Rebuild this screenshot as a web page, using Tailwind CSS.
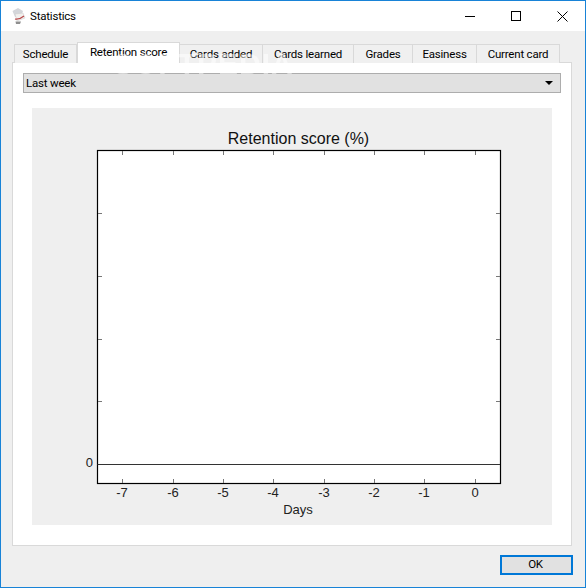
<!DOCTYPE html>
<html lang="en">
<head>
    <meta charset="UTF-8">
    <title>Statistics</title>
    <script src="https://cdn.jsdelivr.net/npm/@tailwindcss/browser@4"></script>
</head>
<body class="w-[586px] h-[588px] overflow-hidden">
    <div class="relative w-full h-full flex flex-col border border-[#1883d7] bg-[#efefef] font-['Roboto','Noto_Sans',sans-serif] text-[11.5px] tracking-[-0.2px] text-black">

        <!-- Title bar -->
        <div class="h-[30px] bg-white flex items-center shrink-0">
            <svg class="ml-[10px] w-[16px] h-[18px]" viewBox="0 0 16 18">
                <path d="M1.5 4 L7 1 L12 4 L10 9 L4 10 Z" fill="#d4d6da"/>
                <path d="M4 7 L12 6 L14 11 L6 14 Z" fill="#f1f0ee" stroke="#c8c8c8" stroke-width="0.5"/>
                <path d="M4 12 Q8 13 13 9" fill="none" stroke="#b8494a" stroke-width="1.2"/>
                <path d="M4.5 14.5 H10 L9 17 H5 Z" fill="#8f8f8f"/>
            </svg>
            <span class="ml-[3px] pt-px">Statistics</span>
            <div class="ml-auto flex items-center">
                <div class="w-[46px] h-[30px] flex items-center justify-center">
                    <div class="w-[10px] h-px bg-black"></div>
                </div>
                <div class="w-[46px] h-[30px] flex items-center justify-center">
                    <div class="w-[10px] h-[10px] border border-black"></div>
                </div>
                <div class="w-[46px] h-[30px] flex items-center justify-center">
                    <svg class="w-[11px] h-[11px]" viewBox="0 0 11 11"><path d="M0.5 0.5 L10.5 10.5 M10.5 0.5 L0.5 10.5" stroke="#000" stroke-width="1" fill="none"/></svg>
                </div>
            </div>
        </div>

        <!-- Tabs + pane -->
        <div class="ml-[11px] mr-[13px] mt-[11px] flex flex-col">
            <div class="flex items-end h-[21px] pl-[2px] relative z-10 -mb-px">
                <div class="w-[63px] h-[19px] pt-[2px] flex items-center justify-center bg-[#f0f0f0] border border-b-0 border-[#d9d9d9]">Schedule</div>
                <div class="w-[103px] h-[21px] flex items-center justify-center bg-white border border-b-0 border-[#d9d9d9]">Retention score</div>
                <div class="w-[83px] h-[19px] pt-[2px] flex items-center justify-center bg-[#f0f0f0] border border-b-0 border-l-0 border-[#d9d9d9]">Cards added</div>
                <div class="w-[91px] h-[19px] pt-[2px] flex items-center justify-center bg-[#f0f0f0] border border-b-0 border-l-0 border-[#d9d9d9]">Cards learned</div>
                <div class="w-[59px] h-[19px] pt-[2px] flex items-center justify-center bg-[#f0f0f0] border border-b-0 border-l-0 border-[#d9d9d9]">Grades</div>
                <div class="w-[64px] h-[19px] pt-[2px] flex items-center justify-center bg-[#f0f0f0] border border-b-0 border-l-0 border-[#d9d9d9]">Easiness</div>
                <div class="w-[83px] h-[19px] pt-[2px] flex items-center justify-center bg-[#f0f0f0] border border-b-0 border-l-0 border-[#d9d9d9]">Current card</div>
            </div>
            <div class="h-[484px] bg-white border border-[#d9d9d9] pt-[10px] px-[10px]">
                <div class="h-[20px] flex items-center justify-between bg-[#e1e1e1] border border-[#adadad] pl-[2px] pr-[7px]">
                    <span class="pt-[2px]">Last week</span>
                    <div class="w-0 h-0 border-x-[4px] border-x-transparent border-t-[4px] border-t-black"></div>
                </div>
                <div class="mt-[15px] ml-[9px] w-[520px] h-[417px] bg-[#efefef]">
                    <svg class="w-[520px] h-[417px] tracking-normal font-['Liberation_Sans',Arial,sans-serif]" viewBox="32 108 520 417">
                        <rect x="97.5" y="150.5" width="403" height="333" fill="#fff" stroke="#000" stroke-width="1.2"/>
                        <path d="M97.5 464.5 H500" stroke="#333" stroke-width="1"/>
                        <path d="M122.5 151V155 M173.5 151V155 M223.5 151V155 M273.5 151V155 M324.5 151V155 M374.5 151V155 M424.5 151V155 M475.5 151V155" stroke="#777"/>
                        <path d="M122.5 479V483 M173.5 479V483 M223.5 479V483 M273.5 479V483 M324.5 479V483 M374.5 479V483 M424.5 479V483 M475.5 479V483" stroke="#777"/>
                        <path d="M98 213.5H102 M98 276.5H102 M98 339.5H102 M98 401.5H102 M496 213.5H500 M496 276.5H500 M496 339.5H500 M496 401.5H500" stroke="#777"/>
                        <text x="298.5" y="144" text-anchor="middle" font-size="16" fill="#111">Retention score (%)</text>
                        <text x="93" y="467" text-anchor="end" font-size="13" fill="#222">0</text>
                        <g font-size="13" fill="#222" text-anchor="middle">
                            <text x="122" y="497">-7</text>
                            <text x="173" y="497">-6</text>
                            <text x="223" y="497">-5</text>
                            <text x="273" y="497">-4</text>
                            <text x="324" y="497">-3</text>
                            <text x="374" y="497">-2</text>
                            <text x="424" y="497">-1</text>
                            <text x="475" y="497">0</text>
                            <text x="298" y="514">Days</text>
                        </g>
                    </svg>
                </div>
            </div>
        </div>

        <!-- Footer -->
        <div class="flex justify-end mr-[12px] mt-[9px]">
            <button class="w-[73px] h-[20px] pr-[2px] bg-[#e1e1e1] border-2 border-[#0078d7] flex items-center justify-center">OK</button>
        </div>

        <!-- Watermark -->
        <div class="absolute z-20 left-[112px] top-[46px] text-[30px] leading-[34px] tracking-[1px] font-bold text-white/50 blur-[0.6px] font-['Liberation_Sans',sans-serif] pointer-events-none">SOFTPEDIA</div>
    </div>
</body>
</html>
